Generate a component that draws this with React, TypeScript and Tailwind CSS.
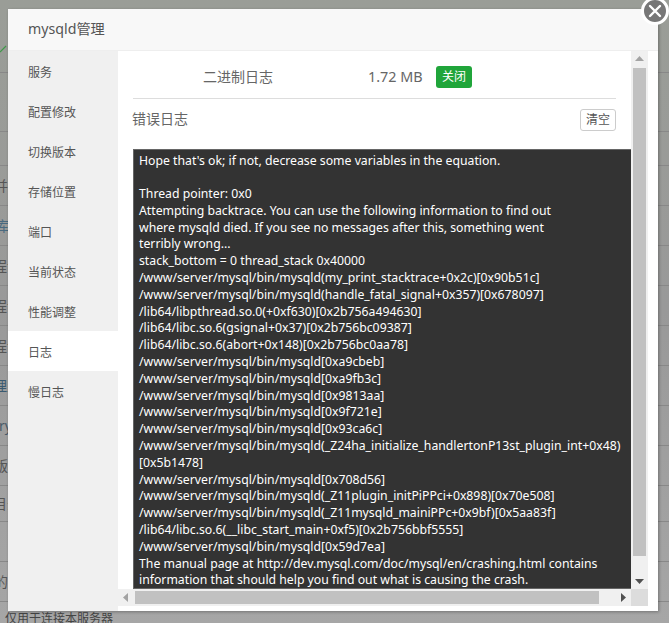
import React from 'react';

const FONT = '"Noto Sans", "Noto Sans CJK SC", sans-serif';

const MENU = ['服务', '配置修改', '切换版本', '存储位置', '端口', '当前状态', '性能调整', '日志', '慢日志'];

const LOG_LINES = [
  "Hope that's ok; if not, decrease some variables in the equation.",
  '',
  'Thread pointer: 0x0',
  'Attempting backtrace. You can use the following information to find out',
  'where mysqld died. If you see no messages after this, something went',
  'terribly wrong...',
  'stack_bottom = 0 thread_stack 0x40000',
  '/www/server/mysql/bin/mysqld(my_print_stacktrace+0x2c)[0x90b51c]',
  '/www/server/mysql/bin/mysqld(handle_fatal_signal+0x357)[0x678097]',
  '/lib64/libpthread.so.0(+0xf630)[0x2b756a494630]',
  '/lib64/libc.so.6(gsignal+0x37)[0x2b756bc09387]',
  '/lib64/libc.so.6(abort+0x148)[0x2b756bc0aa78]',
  '/www/server/mysql/bin/mysqld[0xa9cbeb]',
  '/www/server/mysql/bin/mysqld[0xa9fb3c]',
  '/www/server/mysql/bin/mysqld[0x9813aa]',
  '/www/server/mysql/bin/mysqld[0x9f721e]',
  '/www/server/mysql/bin/mysqld[0x93ca6c]',
  '/www/server/mysql/bin/mysqld(_Z24ha_initialize_handlertonP13st_plugin_int+0x48)',
  '[0x5b1478]',
  '/www/server/mysql/bin/mysqld[0x708d56]',
  '/www/server/mysql/bin/mysqld(_Z11plugin_initPiPPci+0x898)[0x70e508]',
  '/www/server/mysql/bin/mysqld(_Z11mysqld_mainiPPc+0x9bf)[0x5aa83f]',
  '/lib64/libc.so.6(__libc_start_main+0xf5)[0x2b756bbf5555]',
  '/www/server/mysql/bin/mysqld[0x59d7ea]',
  'The manual page at http://dev.mysql.com/doc/mysql/en/crashing.html contains',
  'information that should help you find out what is causing the crash.',
];

// rows of the page behind the dialog, only their left ends stick out
const BG_ROWS: { h: string; text?: string; color?: string; cls?: string }[] = [
  { h: 'h-[73px]' },
  { h: 'h-[59px]' },
  { h: 'h-[34px]' },
  { h: 'h-[40px]', text: '并发', cls: '-ml-[6px]' },
  { h: 'h-[40px]', text: '库', color: 'text-[#4a6a80]', cls: '-ml-[5px]' },
  { h: 'h-[40px]', text: '程试', cls: '-ml-[7px]' },
  { h: 'h-[40px]', text: '程试', cls: '-ml-[7px]' },
  { h: 'h-[40px]', text: '程试', cls: '-ml-[7px]' },
  { h: 'h-[40px]', text: '理工', color: 'text-[#3a5a70]', cls: '-ml-[7px]' },
  { h: 'h-[40px]', text: 'ry', color: 'text-[#4a5a68]', cls: '-ml-[1px]' },
  { h: 'h-[40px]', text: '版本', cls: '-ml-[6px]' },
  { h: 'h-[36px]', text: '目录', cls: '-ml-[7px]' },
  { h: 'h-[40px]' },
  { h: 'h-[40px]', text: '的文', cls: '-ml-[6px]' },
];

const Arrow: React.FC<{ points: string; color: string }> = ({ points, color }) => (
  <svg width="17" height="17" viewBox="0 0 17 17" className="block">
    <polygon points={points} fill={color} />
  </svg>
);

const App: React.FC = () => {
  return (
    <div className="relative h-[623px] w-[669px] overflow-hidden bg-gradient-to-b from-[#9a9d97] via-[#999999] to-[#a6a6a6] text-sm" style={{ fontFamily: FONT }}>
      <div className="flex flex-col">
        {BG_ROWS.map((row, i) => (
          <div key={i} className={`${row.h} flex items-center overflow-hidden border-b border-[#888888]`}>
            {row.text && <span className={`${row.cls} ${row.color ?? 'text-[#555555]'} whitespace-nowrap`}>{row.text}</span>}
          </div>
        ))}
        <div className="mt-[9px] pl-[5px] text-xs text-[#444444] whitespace-nowrap">仅用于连接本服务器</div>
      </div>
      <svg width="8" height="10" viewBox="0 0 8 10" className="absolute left-0 top-[44px]">
        <path d="M0 8 L6 2" stroke="#3f9a4a" strokeWidth="1.2" fill="none" />
      </svg>

      {/* dialog */}
      <div className="absolute left-[8px] top-[9px] flex h-[602px] w-[650px] flex-col bg-white shadow-[1px_1px_3px_rgba(0,0,0,0.3)]">
        <div className="flex h-[42px] shrink-0 items-center border-b border-[#eeeeee] bg-[#f8f8f8] pl-[20px] text-[14.2px] text-[#555555]">
          mysqld管理
        </div>
        <div className="flex min-h-0 flex-1">
          <div className="w-[110px] shrink-0 bg-[#f0f0f0]">
            {MENU.map((item) => (
              <div
                key={item}
                className={`flex h-[40px] items-center pl-[20px] pt-[3px] text-xs text-[#555555] ${item === '日志' ? 'bg-white' : ''}`}
              >
                {item}
              </div>
            ))}
          </div>
          <div className="flex min-w-0 flex-1 flex-col pb-[5px] pr-[10px]">
            <div className="grid min-h-0 flex-1 grid-cols-[513px_17px] grid-rows-[538px_17px]">
              <div className="overflow-hidden pl-[15px]">
                <div className="flex h-[48px] w-[483px] items-center border-b border-[#dddddd] pb-[10px] pt-[15px] text-[#666666]">
                  <span className="ml-[70px] w-[165px]">二进制日志</span>
                  <span className="w-[68px] text-[14.4px]">1.72 MB</span>
                  <span className="flex h-[22px] w-[36px] shrink-0 items-center justify-center rounded-[3px] bg-[#20a53a] text-xs text-white">关闭</span>
                </div>
                <div className="flex h-[50px] w-[483px] items-start justify-between pt-[10px] text-[#666666]">
                  <span className="-ml-px">错误日志</span>
                  <span className="flex h-[22px] w-[36px] items-center justify-center rounded-[3px] border border-[#cccccc] text-xs text-[#555555]">清空</span>
                </div>
                <div className="h-[440px] w-[520px] border border-[#666666] bg-[#333333] pl-[5px] pt-[2.5px] text-[12.25px] leading-[16.8px] text-white">
                  {LOG_LINES.map((line, i) => (
                    <div key={i} className="h-[16.8px] whitespace-pre">{line}</div>
                  ))}
                </div>
              </div>

              {/* vertical scrollbar */}
              <div className="flex flex-col bg-[#f0f0f0]">
                <Arrow points="8.5,5 13,10 4,10" color="#a3a3a3" />
                <div className="mx-auto h-[488px] w-[13px] bg-[#c1c1c1]" />
                <div className="mt-auto">
                  <Arrow points="4,7 13,7 8.5,12" color="#505050" />
                </div>
              </div>

              {/* horizontal scrollbar */}
              <div className="flex items-center bg-[#f0f0f0]">
                <Arrow points="5,8.5 10,4 10,13" color="#a3a3a3" />
                <div className="h-[13px] w-[464px] bg-[#c1c1c1]" />
                <div className="ml-auto">
                  <Arrow points="7,4 12,8.5 7,13" color="#505050" />
                </div>
              </div>
              <div className="bg-[#dcdcdc]" />
            </div>
          </div>
        </div>
      </div>

      {/* close button */}
      <div className="absolute left-[641px] top-[-3px] flex h-[28px] w-[28px] items-center justify-center rounded-full border-[3px] border-white bg-[#777777]">
        <svg width="14" height="14" viewBox="0 0 14 14">
          <path d="M2 2 L12 12 M12 2 L2 12" stroke="#ffffff" strokeWidth="2.4" strokeLinecap="round" />
        </svg>
      </div>
    </div>
  );
};

export default App;
